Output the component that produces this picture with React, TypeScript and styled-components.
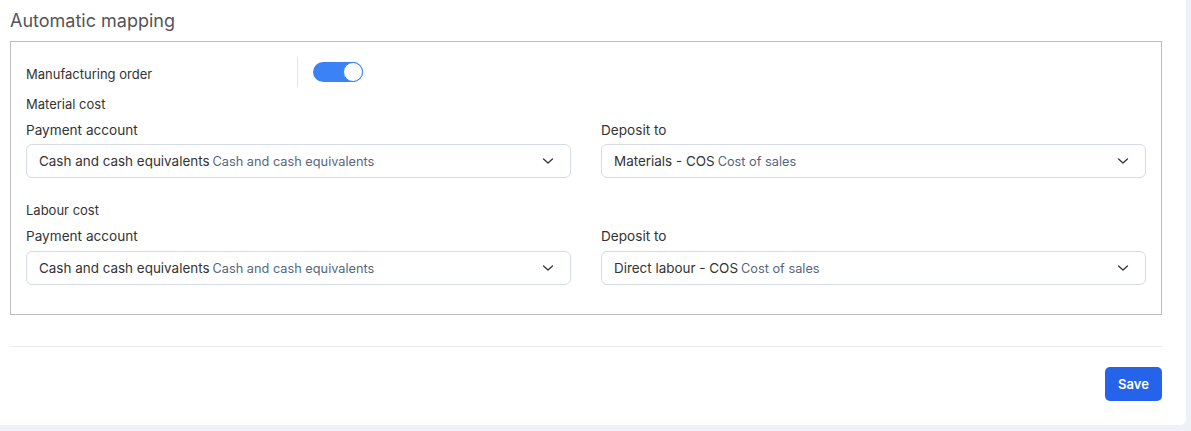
import React, { useState } from "react";
import styled, { createGlobalStyle } from "styled-components";

const Global = createGlobalStyle`
  html, body { margin: 0; padding: 0; }
  body {
    background: #eef1f7;
    font-family: Inter, "Noto Sans", "Liberation Sans", sans-serif;
    color: #333;
    -webkit-font-smoothing: antialiased;
  }
  * { box-sizing: border-box; }
`;

const Card = styled.div`
  width: 1186px;
  height: 425px;
  background: #fff;
  border-bottom-right-radius: 6px;
  padding: 9px 24px 0 10px;
  display: flex;
  flex-direction: column;
`;

const Title = styled.h2`
  margin: 0;
  font-size: 18px;
  line-height: 24px;
  font-weight: 400;
  color: #555;
`;

const Fieldset = styled.div`
  margin-top: 8px;
  border: 1px solid #bdbdbd;
  padding: 15px 15px 29px 15px;
  display: flex;
  flex-direction: column;
`;

const ToggleRow = styled.div`
  display: flex;
  align-items: center;
  height: 30px;
`;

const ToggleLabel = styled.div`
  width: 271px;
  font-size: 13px;
  line-height: 20px;
  padding-top: 4px;
  color: #333;
`;

const VDivider = styled.div`
  width: 1px;
  align-self: stretch;
  background: #e3e3e3;
  margin-right: 15px;
`;

const Switch = styled.button<{ $on: boolean }>`
  position: relative;
  width: 50px;
  height: 20px;
  border-radius: 10px;
  border: none;
  padding: 0;
  cursor: pointer;
  background: ${(p) => (p.$on ? "#3b82f6" : "#ccc")};
  &::after {
    content: "";
    position: absolute;
    top: 0;
    left: ${(p) => (p.$on ? "30px" : "0")};
    width: 20px;
    height: 20px;
    border-radius: 50%;
    background: #fff;
    border: 1px solid ${(p) => (p.$on ? "#3b82f6" : "#ccc")};
    box-sizing: border-box;
  }
`;

const Section = styled.div<{ $top: number }>`
  margin-top: ${(p) => p.$top}px;
  font-size: 13px;
  line-height: 20px;
  color: #333;
`;

const Grid = styled.div<{ $top: number }>`
  margin-top: ${(p) => p.$top}px;
  display: grid;
  grid-template-columns: 1fr 1fr;
  column-gap: 30px;
`;

const Field = styled.div`
  display: flex;
  flex-direction: column;
`;

const Label = styled.label<{ $gap: number }>`
  font-size: 13.6px;
  line-height: 20px;
  color: #333;
  margin-bottom: ${(p) => p.$gap}px;
`;

const Select = styled.div`
  height: 34px;
  border: 1px solid #d4dbe4;
  border-radius: 6px;
  display: flex;
  align-items: center;
  padding: 0 16px 0 12px;
  background: #fff;
`;

const Value = styled.span`
  flex: 1;
  font-size: 13.45px;
  color: #333;
  white-space: nowrap;
`;

const Sub = styled.span`
  font-size: 12.75px;
  color: #55677d;
  margin-left: 3px;
`;

const HDivider = styled.div`
  margin-top: 31px;
  height: 1px;
  background: #ececec;
  margin-right: -1px;
`;

const Footer = styled.div`
  display: flex;
  justify-content: flex-end;
  margin-top: 20px;
`;

const SaveButton = styled.button`
  width: 57px;
  height: 34px;
  background: #2563eb;
  color: #fff;
  border: none;
  border-radius: 5px;
  font-family: inherit;
  font-size: 13px;
  font-weight: 600;
  cursor: pointer;
`;

const Chevron = () => (
  <svg width="12" height="8" viewBox="0 0 12 8" fill="none">
    <path d="M1.5 2 L6 6 L10.5 2" stroke="#333" strokeWidth="1.3" strokeLinecap="round" strokeLinejoin="round" />
  </svg>
);

const SelectBox = ({ value, sub }: { value: string; sub: string }) => (
  <Select>
    <Value>
      {value}
      <Sub>{sub}</Sub>
    </Value>
    <Chevron />
  </Select>
);

export default function App() {
  const [on, setOn] = useState(true);
  return (
    <>
      <Global />
      <Card>
        <Title>Automatic mapping</Title>
        <Fieldset>
          <ToggleRow>
            <ToggleLabel>Manufacturing order</ToggleLabel>
            <VDivider />
            <Switch $on={on} onClick={() => setOn(!on)} aria-label="Manufacturing order" />
          </ToggleRow>
          <Section $top={7}>Material cost</Section>
          <Grid $top={6}>
            <Field>
              <Label $gap={4}>Payment account</Label>
              <SelectBox value="Cash and cash equivalents" sub="Cash and cash equivalents" />
            </Field>
            <Field>
              <Label $gap={4}>Deposit to</Label>
              <SelectBox value="Materials - COS" sub="Cost of sales" />
            </Field>
          </Grid>
          <Section $top={22}>Labour cost</Section>
          <Grid $top={6}>
            <Field>
              <Label $gap={5}>Payment account</Label>
              <SelectBox value="Cash and cash equivalents" sub="Cash and cash equivalents" />
            </Field>
            <Field>
              <Label $gap={5}>Deposit to</Label>
              <SelectBox value="Direct labour - COS" sub="Cost of sales" />
            </Field>
          </Grid>
        </Fieldset>
        <HDivider />
        <Footer>
          <SaveButton>Save</SaveButton>
        </Footer>
      </Card>
    </>
  );
}
